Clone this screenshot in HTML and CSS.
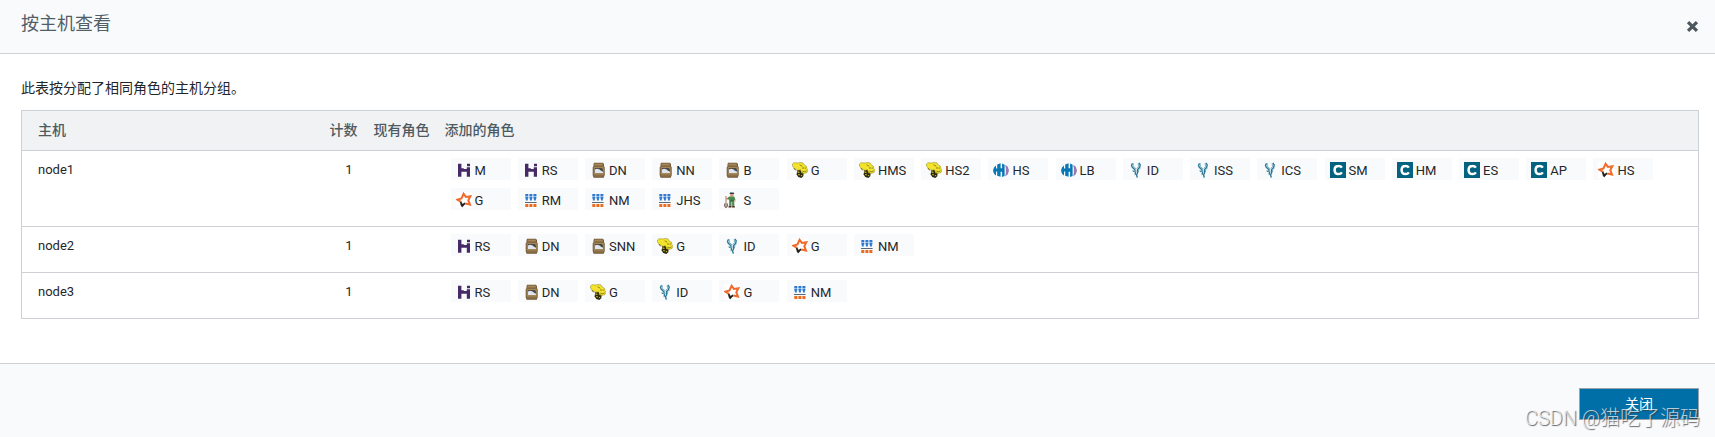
FILE: index.html
```html
<!DOCTYPE html>
<html lang="zh-CN">
<head>
<meta charset="utf-8">
<title>按主机查看</title>
<link rel="stylesheet" href="styles.css">
</head>
<body>
<svg class="sprite" aria-hidden="true">
  <symbol id="hbase" viewBox="0 0 16 16">
    <path fill="#452a66" d="M2 1.7h3.4v4.6h2.4v.8h3V5.3H14v9.4h-3.2V9.8H5.4v4.9H2zM11 1.7h3v2.6h-3z"/>
  </symbol>
  <symbol id="hdfs" viewBox="0 0 16 16">
    <path fill="#6f5736" d="M4 .8h9l1 1.4v2l.7 1v8l-1 2.6H3.6l-.9-2.6v-8l.8-1v-2z"/>
    <path fill="#a58659" d="M4.4 1.4h8.4v2.4H4.4zM3.6 4.8h10.2v8.6H3.6z"/>
    <path fill="#8b6f46" d="M4 12.4h9.4v2.4H4zM4.2 3.6h9v1h-9z"/>
    <path fill="#4c4a46" d="M4.8 6h7l1.2 1.6v3.4H4.4z"/>
    <path fill="#dfe5ee" d="M4.8 7.6 7 6.8l2.6.6 1.4 1.4 2 .9v1.3H4.8z"/>
  </symbol>
  <symbol id="hive" viewBox="0 0 16 16">
    <path fill="#2b270d" d="m5.4 7.5 5-1.5 1.3 4.2-.4 4-2 1.8-3-.9-1.7-2.5z"/>
    <path fill="#c9bd22" d="m5.6 9.2 2.2.8-.6 1-2-.5zM6 12l2.2.4-.6 1-1.4-.3zM9.3 10l1.5.6-.2 1-1.5-.6zM9 13l1.4.2-.7 1.1-.9-.3z"/>
    <path fill="#f3e32c" stroke="#8d8417" stroke-width=".5" d="M.5 2 2 .7 6 1 8 .4l3 .5 1.4 2.3 1.9.8.5 2.2 1 2.3-.8 2.1-3 .8-2.6-1.2-1-2.4-2.6.6-1.3-1.3-2 .3-1-2L.5 4z"/>
    <path fill="none" stroke="#4a4410" stroke-width=".6" d="m2 6 2.2 2.7M7.6 2.8l2.6 1.4M11 5v2M13.2 5.4v1.4M10.4 9.2l2.3.5 2-.9"/>
  </symbol>
  <symbol id="hue" viewBox="0 0 16 16">
    <path fill="#0877b5" d="M0 8.4 1 5.6 3 3.5v3h1.2V2.4L7.6 1.3v5h1.5V1.5l2.5 1.2v11.4l-2.5 1V9.8H7.6v5l-3.4-1V9.6H3v4L1 11.8z"/>
    <path fill="#9b77b6" d="m12.2 2.7 2.6 2L16 8.5l-1.2 3.8-2.6 2.2.7-3.7V6.6z"/>
  </symbol>
  <symbol id="impala" viewBox="0 0 16 16">
    <path fill="none" stroke="#2b7897" stroke-width="1.4" d="M4.6 1.2 3.5 3.4l.8 2L7.3 8M10.8.8l1.4 2-.6 2.6-2 2.2v3.2l-1 2 .7 2.8"/>
    <path fill="none" stroke="#62a8bd" stroke-width=".9" d="M5.2 1.2v3L8.2 7M10.2 1.2l.3 3.4-1.8 2M12.5 6.2l-2.2 1.5"/>
    <path fill="#2b7897" d="m4 8.7 4-.5.5 1L5.6 10zM6.6 10.2l1.6-.8-.2 2.8-1.2 1.4zM9.4 8.4l2 .3-1.7 1.6z"/>
  </symbol>
  <symbol id="cloudera" viewBox="0 0 16 16">
    <path fill="#02627f" d="M0 0h16v16H0z"/>
    <path fill="none" stroke="#fff" stroke-width="2.5" d="M11.9 5.6A4 4 0 0 0 8.5 3.9C6 3.9 4.6 5.6 4.6 8s1.4 4.1 3.9 4.1a4 4 0 0 0 3.4-1.7"/>
  </symbol>
  <symbol id="spark" viewBox="0 0 16 16">
    <path fill="#fff" d="M0 0h16v16H0z"/>
    <path fill="none" stroke="#24221f" stroke-width="1.8" d="m4.6 9.5 1.1 3.9 3.6-2.2"/>
    <path fill="#24221f" d="m4.9 11 1.3 4.6 2.4-3.1z"/>
    <path fill="none" stroke="#f26a2b" stroke-width="2" d="m4.6 9.6-3.2-1.9 4.1-1.3 2.1-4.6 2.3 3.1 4.5-.7-2.1 4 1.7 4.3-4.6-1"/>
  </symbol>
  <symbol id="yarn" viewBox="0 0 16 16">
    <path fill="#2f7bd0" d="M2.3 2h3v2h-3zM6.4 2h3v2h-3zM10.4 2h3v2h-3zM2.3 4.4h3v2.2h-.5v2h-2v-2h-.5zM6.4 4.4h3v2.2h-.5v2h-2v-2h-.5zM10.4 4.4h3v2.2h-.5v2h-2v-2h-.5z"/>
    <path fill="#5a6873" d="M2 10h11.6v1H2z"/>
    <path fill="#ec6c1f" d="M2.3 12h3v3h-3zM6.4 12h3v3h-3zM10.4 12h3v3h-3z"/>
  </symbol>
  <symbol id="zookeeper" viewBox="0 0 16 16">
    <path fill="none" stroke="#a06b48" stroke-width=".9" d="M2 4v8"/>
    <path fill="none" stroke="#54382b" stroke-width=".8" d="M.6 11.5v3l1.4 1.2 1.4-1.2v-3M2 11.6v3.6"/>
    <path fill="#26384a" d="M6 .5h3.6l.7 1.5H5.6z"/>
    <path fill="#d49b72" d="M6.2 2h3.4v2.5H6.2zM1.8 6h2v1.2h-2zM10.4 7.3h1v2.5h-1z"/>
    <path fill="#4d8752" d="m5.3 4.4 5 .2 1.1 2.8-1.2.7.1 5.6H8.1V10h-.6v3.7H5.2V7.4H3.4V6.1z"/>
    <path fill="#2d5f3c" d="M6 7.8h3.8v1H6z"/>
    <path fill="#4c3023" d="M4.8 13.7h2.7v1.8H4.4zM8.1 13.7h2.3l.7 1.8h-3z"/>
  </symbol>
</svg>

<div class="dialog" role="dialog" aria-labelledby="dialog-title">
  <header class="dialog-header">
    <h1 class="dialog-title" id="dialog-title">按主机查看</h1>
    <button class="close-icon" type="button" aria-label="关闭">
      <svg viewBox="0 0 12 12"><path d="m1.9 1.9 8.2 8.2m0-8.2-8.2 8.2"/></svg>
    </button>
  </header>

  <main class="dialog-body">
    <p class="intro">此表按分配了相同角色的主机分组。</p>
    <table class="hosts">
      <colgroup><col class="col-host"><col class="col-count"><col class="col-existing"><col></colgroup>
      <thead>
        <tr><th>主机</th><th>计数</th><th>现有角色</th><th>添加的角色</th></tr>
      </thead>
      <tbody>
        <tr>
          <td>node1</td><td class="count">1</td><td></td>
          <td class="roles">
            <span class="role"><svg class="icon"><use href="#hbase"/></svg>M</span>
            <span class="role"><svg class="icon"><use href="#hbase"/></svg>RS</span>
            <span class="role"><svg class="icon"><use href="#hdfs"/></svg>DN</span>
            <span class="role"><svg class="icon"><use href="#hdfs"/></svg>NN</span>
            <span class="role"><svg class="icon"><use href="#hdfs"/></svg>B</span>
            <span class="role"><svg class="icon"><use href="#hive"/></svg>G</span>
            <span class="role"><svg class="icon"><use href="#hive"/></svg>HMS</span>
            <span class="role"><svg class="icon"><use href="#hive"/></svg>HS2</span>
            <span class="role"><svg class="icon"><use href="#hue"/></svg>HS</span>
            <span class="role"><svg class="icon"><use href="#hue"/></svg>LB</span>
            <span class="role"><svg class="icon"><use href="#impala"/></svg>ID</span>
            <span class="role"><svg class="icon"><use href="#impala"/></svg>ISS</span>
            <span class="role"><svg class="icon"><use href="#impala"/></svg>ICS</span>
            <span class="role"><svg class="icon"><use href="#cloudera"/></svg>SM</span>
            <span class="role"><svg class="icon"><use href="#cloudera"/></svg>HM</span>
            <span class="role"><svg class="icon"><use href="#cloudera"/></svg>ES</span>
            <span class="role"><svg class="icon"><use href="#cloudera"/></svg>AP</span>
            <span class="role"><svg class="icon"><use href="#spark"/></svg>HS</span>
            <span class="role"><svg class="icon"><use href="#spark"/></svg>G</span>
            <span class="role"><svg class="icon"><use href="#yarn"/></svg>RM</span>
            <span class="role"><svg class="icon"><use href="#yarn"/></svg>NM</span>
            <span class="role"><svg class="icon"><use href="#yarn"/></svg>JHS</span>
            <span class="role"><svg class="icon"><use href="#zookeeper"/></svg>S</span>
          </td>
        </tr>
        <tr>
          <td>node2</td><td class="count">1</td><td></td>
          <td class="roles">
            <span class="role"><svg class="icon"><use href="#hbase"/></svg>RS</span>
            <span class="role"><svg class="icon"><use href="#hdfs"/></svg>DN</span>
            <span class="role"><svg class="icon"><use href="#hdfs"/></svg>SNN</span>
            <span class="role"><svg class="icon"><use href="#hive"/></svg>G</span>
            <span class="role"><svg class="icon"><use href="#impala"/></svg>ID</span>
            <span class="role"><svg class="icon"><use href="#spark"/></svg>G</span>
            <span class="role"><svg class="icon"><use href="#yarn"/></svg>NM</span>
          </td>
        </tr>
        <tr>
          <td>node3</td><td class="count">1</td><td></td>
          <td class="roles">
            <span class="role"><svg class="icon"><use href="#hbase"/></svg>RS</span>
            <span class="role"><svg class="icon"><use href="#hdfs"/></svg>DN</span>
            <span class="role"><svg class="icon"><use href="#hive"/></svg>G</span>
            <span class="role"><svg class="icon"><use href="#impala"/></svg>ID</span>
            <span class="role"><svg class="icon"><use href="#spark"/></svg>G</span>
            <span class="role"><svg class="icon"><use href="#yarn"/></svg>NM</span>
          </td>
        </tr>
      </tbody>
    </table>
  </main>

  <footer class="dialog-footer">
    <button class="primary" type="button">关闭</button>
    <span class="watermark">CSDN @猫吃了源码</span>
  </footer>
</div>
</body>
</html>
```

FILE: styles.css
```css
* { box-sizing: border-box; }

body {
  margin: 0;
  background: #fff;
  color: #1f272b;
  font-family: Roboto, "Noto Sans CJK SC", sans-serif;
  font-size: 13px;
  line-height: 20px;
}

.sprite { display: none; }

.dialog {
  display: flex;
  flex-direction: column;
  min-height: 100vh;
}

.dialog-header {
  display: flex;
  justify-content: space-between;
  align-items: center;
  padding: 12px 16px 17px 21px;
  background: #f9fafc;
  border-bottom: 1px solid #cfd2d5;
}

.dialog-title {
  margin: 0;
  color: #525e66;
  font-size: 18px;
  font-weight: 400;
  line-height: 24px;
}

.close-icon {
  display: flex;
  padding: 4px 0 0;
  border: 0;
  background: none;
}

.close-icon svg {
  width: 13px;
  height: 13px;
  fill: none;
  stroke: #4d585e;
  stroke-width: 3;
}

.dialog-body {
  flex: 1;
  padding: 24px 16px 44px 21px;
}

.intro {
  margin: 0 0 12px;
  font-size: 14px;
}

.hosts {
  width: 100%;
  table-layout: fixed;
  border-collapse: collapse;
  border: 1px solid #cdd1d5;
}

.col-host { width: 300px; }
.col-count { width: 44px; }
.col-existing { width: 71px; }

.hosts th {
  padding: 9px 0 10px 8px;
  background: #f1f2f4;
  color: #4d5a61;
  font-size: 14px;
  font-weight: 500;
  text-align: left;
  white-space: nowrap;
}

.hosts td {
  padding: 9px 0 8px 8px;
  vertical-align: top;
}

.hosts th:first-child,
.hosts td:first-child { padding-left: 16px; }

.hosts tr { border-bottom: 1px solid #cdd1d5; }

.hosts .count {
  padding-right: 13px;
  text-align: right;
}

.hosts .roles { padding: 7px 8px 8px 10px; }

.role {
  display: inline-block;
  width: 60px;
  height: 22px;
  margin: 0 0 8px 4px;
  padding: 3px 0 0 5px;
  background: #f9fafc;
  vertical-align: top;
  white-space: nowrap;
}

.icon {
  width: 16px;
  height: 16px;
  margin: 1px 3px 0 0;
  vertical-align: top;
}

.dialog-footer {
  position: relative;
  display: flex;
  justify-content: flex-end;
  padding: 24px 16px 17px;
  background: #f9fafc;
  border-top: 1px solid #cfd2d5;
}

.primary {
  width: 120px;
  height: 32px;
  border: 1px solid #9aa3a9;
  background: #006fa8;
  color: #fff;
  font: inherit;
  font-size: 14px;
}

.watermark {
  position: absolute;
  right: 15px;
  bottom: 7px;
  color: rgba(255, 255, 255, .7);
  font-size: 20px;
  font-weight: 300;
  line-height: 24px;
  text-shadow: 1px 1px 1px rgba(60, 60, 60, .8);
  white-space: nowrap;
  pointer-events: none;
}
```
